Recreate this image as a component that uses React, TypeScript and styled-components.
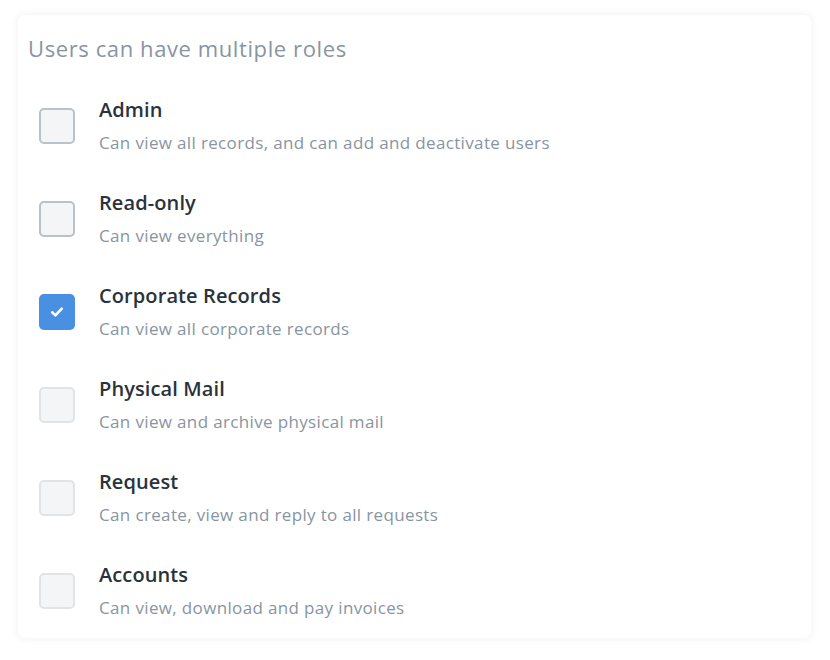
import React from 'react';
import styled, { createGlobalStyle } from 'styled-components';

const GlobalStyle = createGlobalStyle`
  html, body {
    margin: 0;
    padding: 0;
    background: #ffffff;
  }
  body {
    font-family: "Open Sans", "Noto Sans", sans-serif;
    -webkit-font-smoothing: antialiased;
  }
`;

const Page = styled.div`
  width: 830px;
  height: 660px;
  padding: 15px 19px 22px 18px;
  box-sizing: border-box;
`;

const Card = styled.div`
  height: 100%;
  box-sizing: border-box;
  background: #ffffff;
  border-radius: 7px;
  box-shadow: 0 0 6px 3px rgba(0, 0, 0, 0.035);
  padding: 18px 10px 0 10px;
`;

const Heading = styled.h2`
  margin: 0 0 34px 0;
  font-size: 22px;
  font-weight: 400;
  letter-spacing: 0.6px;
  color: #8895a1;
  line-height: 30px;
`;

const List = styled.div`
  display: flex;
  flex-direction: column;
  gap: 36px;
`;

const Row = styled.label`
  display: flex;
  align-items: center;
  gap: 24px;
  padding-left: 11px;
  cursor: pointer;
`;

const Box = styled.span<{ $checked?: boolean; $disabled?: boolean }>`
  flex: none;
  width: 36px;
  height: 36px;
  box-sizing: border-box;
  border-radius: 5px;
  display: flex;
  align-items: center;
  justify-content: center;
  background: ${p => (p.$checked ? '#4a90e2' : '#f4f5f6')};
  border: ${p =>
    p.$checked ? 'none' : p.$disabled ? '2px solid #e1e4e7' : '2px solid #b9c1c9'};
`;

const Text = styled.div`
  display: flex;
  flex-direction: column;
  gap: 9px;
`;

const Title = styled.div`
  font-size: 20px;
  font-weight: 600;
  letter-spacing: 0.1px;
  color: #2a323c;
  line-height: 26px;
`;

const Desc = styled.div`
  font-size: 17px;
  letter-spacing: 0.35px;
  color: #8895a1;
  line-height: 22px;
`;

const roles = [
  { title: 'Admin', desc: 'Can view all records, and can add and deactivate users' },
  { title: 'Read-only', desc: 'Can view everything' },
  { title: 'Corporate Records', desc: 'Can view all corporate records', checked: true },
  { title: 'Physical Mail', desc: 'Can view and archive physical mail', disabled: true },
  { title: 'Request', desc: 'Can create, view and reply to all requests', disabled: true },
  { title: 'Accounts', desc: 'Can view, download and pay invoices', disabled: true },
];

const Check = () => (
  <svg width="14" height="12" viewBox="0 0 14 12" fill="none">
    <path d="M2.2 6.3l3.2 3.1L11.8 2.6" stroke="#fff" strokeWidth="2.6" strokeLinecap="round" strokeLinejoin="round" />
  </svg>
);

export default function App() {
  return (
    <>
      <GlobalStyle />
      <Page>
        <Card>
          <Heading>Users can have multiple roles</Heading>
          <List>
            {roles.map(r => (
              <Row key={r.title}>
                <Box $checked={r.checked} $disabled={r.disabled}>
                  {r.checked && <Check />}
                </Box>
                <Text>
                  <Title>{r.title}</Title>
                  <Desc>{r.desc}</Desc>
                </Text>
              </Row>
            ))}
          </List>
        </Card>
      </Page>
    </>
  );
}
